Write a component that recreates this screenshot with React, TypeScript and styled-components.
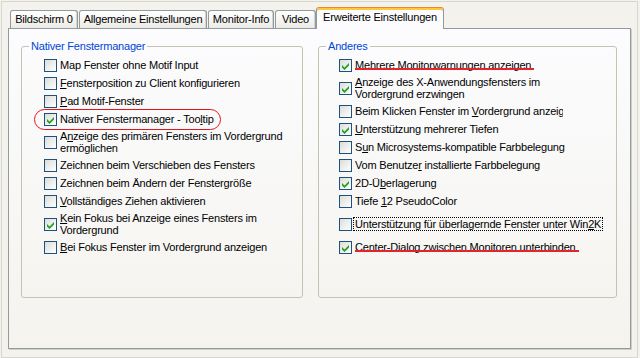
import React from 'react';
import styled, { createGlobalStyle } from 'styled-components';

const Global = createGlobalStyle`
  html, body { margin: 0; padding: 0; }
  body {
    width: 640px; height: 358px; overflow: hidden;
    background: #f3f2ec;
    font-family: "Liberation Sans", Arial, sans-serif;
    font-size: 11px; letter-spacing: -0.2px; color: #000;
  }
`;

const Page = styled.div`
  width: 640px; height: 358px; box-sizing: border-box;
  padding: 1px 2px 0 1px; background: #f3f2ec;
`;

const Frame = styled.div`
  box-sizing: border-box; width: 637px; height: 357px;
  border: 1px solid #d8d7ce;
  padding: 5px 6px 8px 6px;
  display: flex; flex-direction: column;
`;

const TabStrip = styled.div`
  display: flex; align-items: flex-end; gap: 1px;
  height: 22px; padding-left: 2px; margin-bottom: -1px;
  position: relative; z-index: 1;
`;

const Tab = styled.div<{ $w: number; $active?: boolean }>`
  box-sizing: border-box;
  width: ${p => p.$w}px;
  height: ${p => (p.$active ? 22 : 18)}px;
  margin-bottom: ${p => (p.$active ? 0 : 1)}px;
  margin-left: ${p => (p.$active ? -1 : 0)}px;
  display: flex; align-items: center; justify-content: center;
  line-height: 13px; white-space: nowrap;
  border: 1px solid #919b9c;
  border-radius: 3px 3px 0 0;
  ${p => p.$active
    ? `border-top-color: #e68b2c; border-bottom: none; background: #fcfcfe;
       box-shadow: inset 0 2px 0 #ffc73c; padding-bottom: 2px;`
    : `border-bottom: none; background: linear-gradient(#ffffff, #ecebe6);
       box-shadow: inset -1px 0 0 #d6d5cd;`}
`;

const Pane = styled.div`
  box-sizing: border-box; height: 321px;
  border: 1px solid #919b9c;
  background: linear-gradient(#fcfcfe, #f4f3ee);
  box-shadow: 1px 1px 0 #d0cfc6;
  padding: 11px 13px 0 12px;
  display: grid; grid-template-columns: 282px 299px; column-gap: 15px;
  align-items: start;
`;

const Group = styled.fieldset`
  margin: 0; min-width: 0;
  border: 1px solid #c5c2b4; border-radius: 3px;
  padding: 3px 6px 41px 7px;
`;

const Legend = styled.legend`
  padding: 0 2px; color: #0046d5; line-height: 13px; font-size: 11px;
`;

const List = styled.div<{ $indent: number }>`
  display: flex; flex-direction: column; padding-left: ${p => p.$indent}px;
`;

const Row = styled.div<{ $tall?: boolean }>`
  position: relative;
  display: flex; align-items: center;
  height: ${p => (p.$tall ? 28 : 18)}px;
`;

const Box = styled.span`
  box-sizing: border-box; flex: none;
  width: 13px; height: 13px;
  border: 1px solid #1c5180;
  background: linear-gradient(135deg, #dcdcd7, #ffffff);
  display: flex;
`;

const Label = styled.span<{ $w?: number; $clip?: boolean; $focus?: boolean }>`
  margin-left: ${p => (p.$focus ? 1 : 3)}px;
  line-height: 12px;
  white-space: ${p => (p.$w && !p.$clip ? 'normal' : 'nowrap')};
  ${p => (p.$w ? `width: ${p.$w}px;` : '')}
  ${p => (p.$clip ? 'overflow: hidden;' : '')}
  ${p => (p.$focus ? 'border: 1px dotted #000; padding: 0 1px;' : '')}
  u { text-decoration: underline; text-underline-offset: 1px; }
`;

const Mark = styled.span`
  position: relative;
  &::after {
    content: ''; position: absolute;
    left: 0; right: -3px; bottom: 1px; height: 2px;
    background: #e4232a;
  }
`;

const Ring = styled.span`
  position: absolute; left: -10px; top: -1px;
  width: 187px; height: 21px; box-sizing: border-box;
  border: 1px solid #e4141b; border-radius: 11px;
  pointer-events: none;
`;

const Check = () => (
  <svg width="11" height="11" viewBox="0 0 11 11">
    <polygon points="2,5 4.5,7.5 9,3 9,5.5 4.5,10 2,7.5" fill="#21a121" />
  </svg>
);

type Item = {
  label: React.ReactNode;
  checked?: boolean;
  tall?: boolean;
  w?: number;
  clip?: boolean;
  focus?: boolean;
  ring?: boolean;
};

const left: Item[] = [
  { label: 'Map Fenster ohne Motif Input' },
  { label: <><u>F</u>ensterposition zu Client konfigurieren</> },
  { label: <><u>P</u>ad Motif-Fenster</> },
  { label: <>Nativer Fenstermanager - Too<u>l</u>tip</>, checked: true, ring: true },
  { label: <>A<u>n</u>zeige des primären Fensters im Vordergrund ermöglichen</>, tall: true, w: 235 },
  { label: 'Zeichnen beim Verschieben des Fensters' },
  { label: 'Zeichnen beim Ändern der Fenstergröße' },
  { label: <><u>V</u>ollständiges Ziehen aktivieren</> },
  { label: <><u>K</u>ein Fokus bei Anzeige eines Fensters im Vordergrund</>, checked: true, tall: true, w: 235 },
  { label: <><u>B</u>ei Fokus Fenster im Vordergrund anzeigen</> },
];

const right: Item[] = [
  { label: <Mark>Mehrere Monitorwarnungen anzeigen</Mark>, checked: true },
  { label: <><u>A</u>nzeige des X-Anwendungsfensters im Vordergrund erzwingen</>, checked: true, tall: true, w: 208 },
  { label: <>Beim Klicken Fenster im <u>V</u>ordergrund anzeigen</>, w: 208, clip: true },
  { label: <><u>U</u>nterstützung mehrerer Tiefen</>, checked: true },
  { label: <>S<u>u</u>n Microsystems-kompatible Farbbelegung</> },
  { label: <>Vom Benutze<u>r</u> installierte Farbbelegung</> },
  { label: <>2D-Ü<u>b</u>erlagerung</>, checked: true },
  { label: <>Tiefe <u>1</u>2 PseudoColor</> },
  { label: <>Unterstützung für überlagernde Fenster unter Win<u>2</u>K</>, tall: true, focus: true },
  { label: <Mark>Center-Dialog zwischen Monitoren unterbinden</Mark>, checked: true },
];

const Option = ({ item }: { item: Item }) => (
  <Row $tall={item.tall}>
    <Box>{item.checked && <Check />}</Box>
    <Label $w={item.w} $clip={item.clip} $focus={item.focus}>{item.label}</Label>
    {item.ring && <Ring />}
  </Row>
);

const tabs = [
  { t: 'Bildschirm 0', w: 68 },
  { t: 'Allgemeine Einstellungen', w: 128 },
  { t: 'Monitor-Info', w: 66 },
  { t: 'Video', w: 41 },
  { t: 'Erweiterte Einstellungen', w: 128, active: true },
];

export default function App() {
  return (
    <Page>
      <Global />
      <Frame>
        <TabStrip>
          {tabs.map(t => (
            <Tab key={t.t} $w={t.w} $active={t.active}>{t.t}</Tab>
          ))}
        </TabStrip>
        <Pane>
          <Group>
            <Legend>Nativer Fenstermanager</Legend>
            <List $indent={15}>
              {left.map((it, i) => <Option key={i} item={it} />)}
            </List>
          </Group>
          <Group>
            <Legend>Anderes</Legend>
            <List $indent={13}>
              {right.map((it, i) => <Option key={i} item={it} />)}
            </List>
          </Group>
        </Pane>
      </Frame>
    </Page>
  );
}
